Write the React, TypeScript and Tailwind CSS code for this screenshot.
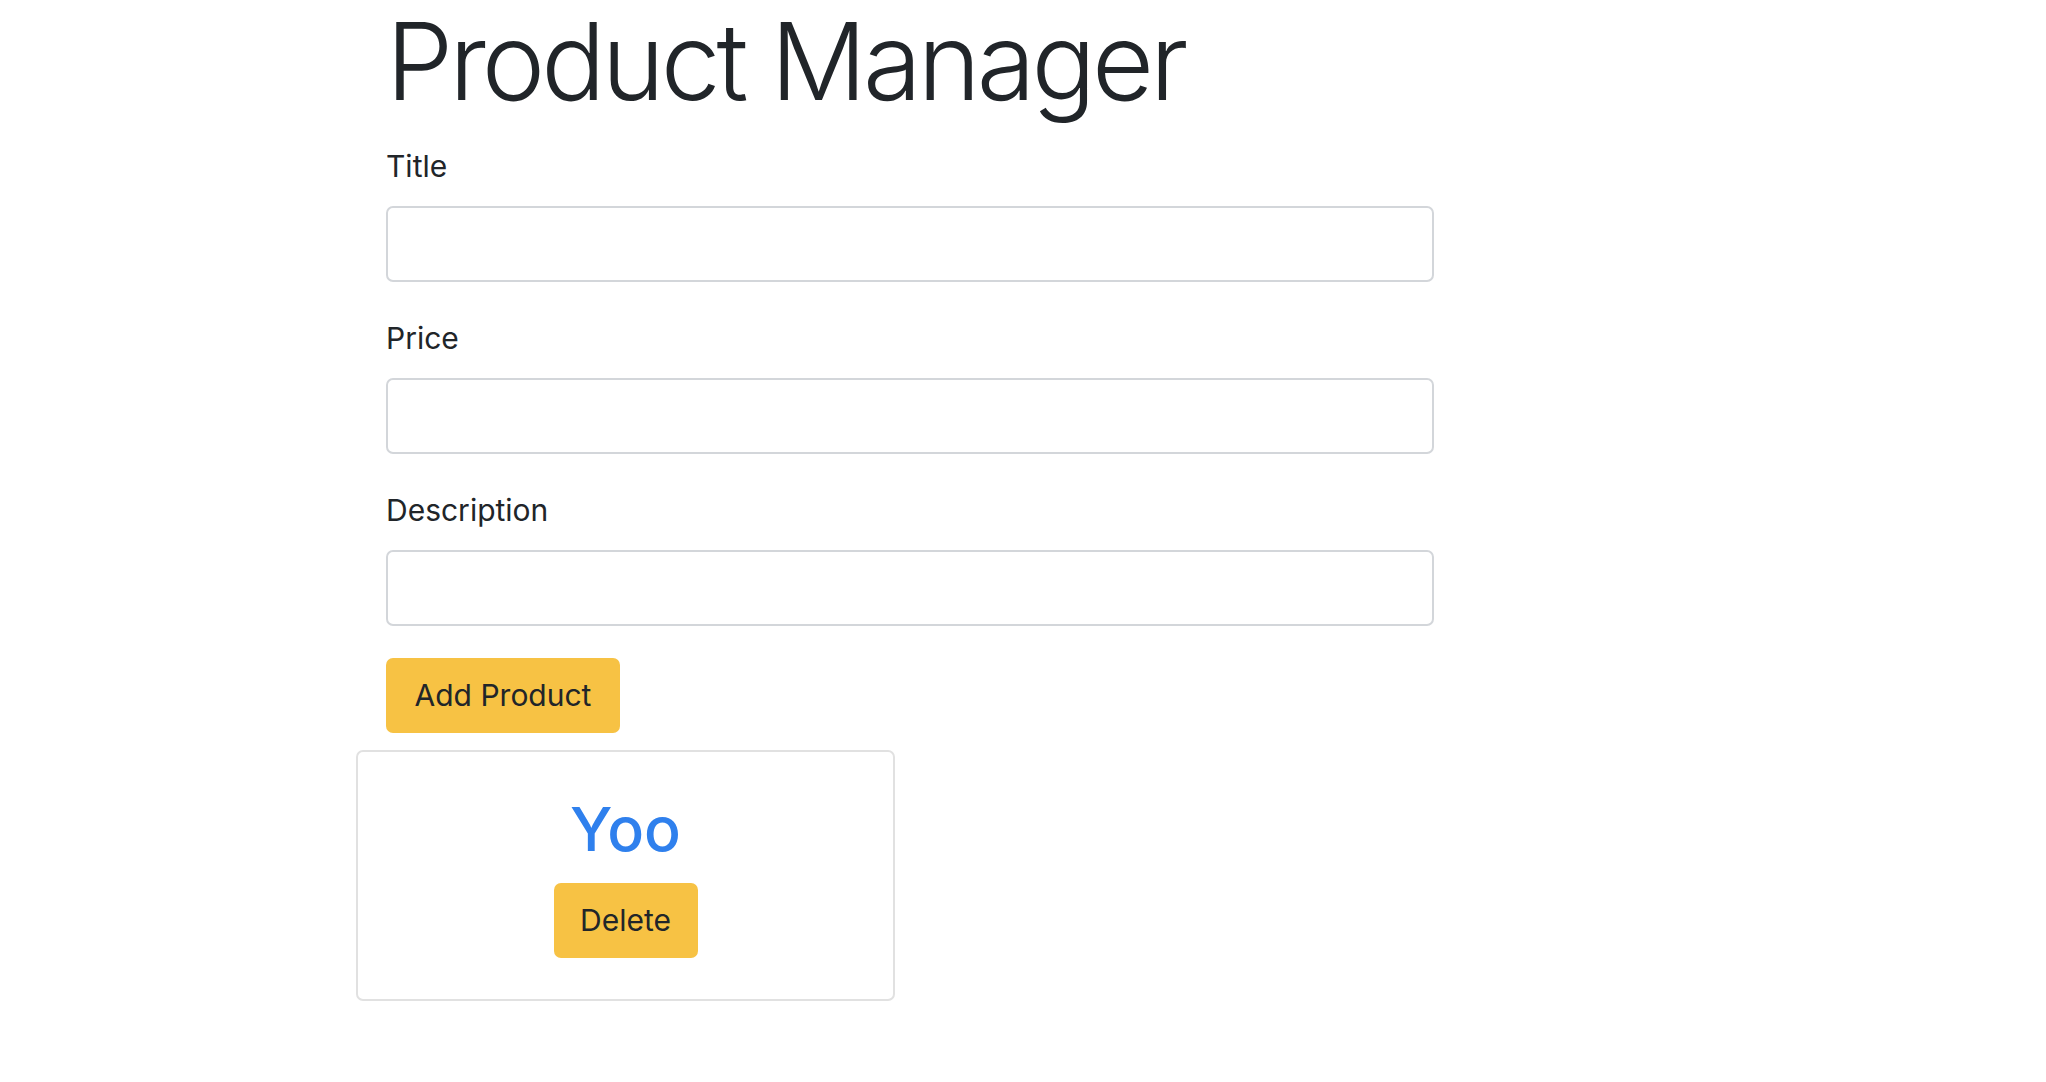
import { useState } from 'react'

type Product = {
  id: number
  title: string
  price: string
  description: string
}

const fields = [
  { key: 'title', label: 'Title' },
  { key: 'price', label: 'Price' },
  { key: 'description', label: 'Description' },
] as const

const App = () => {
  const [form, setForm] = useState({ title: '', price: '', description: '' })
  const [products, setProducts] = useState<Product[]>([
    { id: 1, title: 'Yoo', price: '', description: '' },
  ])

  const addProduct = () => {
    if (!form.title) return
    setProducts((prev) => [...prev, { id: Date.now(), ...form }])
    setForm({ title: '', price: '', description: '' })
  }

  return (
    <div className="min-h-screen bg-white text-[#212529] font-['Inter','Liberation_Sans',sans-serif]">
      <div className="mx-auto w-[1274px]">
        {/* Header */}
        <h1 className="text-[107px] leading-[122px] font-light tracking-[-4px] m-0">
          Product Manager
        </h1>

        {/* Form */}
        <div className="w-[1048px] mt-[22px]">
          {fields.map((field) => (
            <div key={field.key} className="mb-[34px] last-of-type:mb-[32px]">
              <label className="block text-[30px] leading-[45px] mb-[17px]">
                {field.label}
              </label>
              <input
                type="text"
                value={form[field.key]}
                onChange={(e) => setForm({ ...form, [field.key]: e.target.value })}
                className="block w-full h-[76px] px-[22px] text-[30px] border-2 border-[#d3d6da] rounded-[7px] outline-none"
              />
            </div>
          ))}

          <button
            onClick={addProduct}
            className="flex items-center justify-center w-[234px] h-[75px] bg-[#f7c244] rounded-[7px] text-[30px] text-[#212529]"
          >
            Add Product
          </button>
        </div>

        {/* Product list */}
        <div className="-ml-[30px] mt-[17px] flex flex-wrap gap-6">
          {products.map((p) => (
            <div
              key={p.id}
              className="w-[539px] h-[251px] border-2 border-[#e1e1e1] rounded-[7px] flex flex-col items-center pt-[40px]"
            >
              <h2 className="text-[61px] leading-[74px] text-[#2f80ed] font-medium">{p.title}</h2>
              <button
                onClick={() => setProducts((prev) => prev.filter((x) => x.id !== p.id))}
                className="mt-[17px] flex items-center justify-center w-[144px] h-[75px] bg-[#f7c244] rounded-[7px] text-[30px] text-[#212529]"
              >
                Delete
              </button>
            </div>
          ))}
        </div>
      </div>
    </div>
  )
}

export default App
